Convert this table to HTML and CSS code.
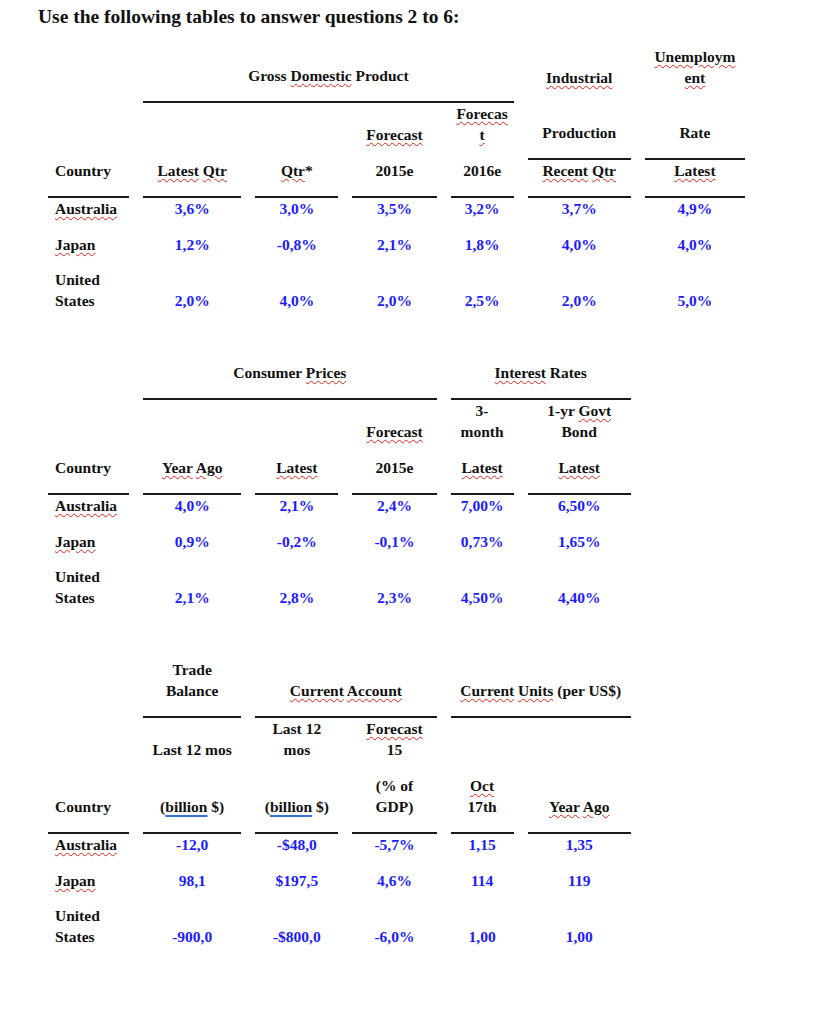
FILE: index.html
```html
<!DOCTYPE html>
<html>
<head>
<meta charset="utf-8">
<link rel="stylesheet" href="styles.css">
</head>
<body>
<p class="title">Use the following tables to answer questions 2 to 6:</p>

<table class="t">
  <colgroup><col class="c1"><col class="c2"><col class="c3"><col class="c4"><col class="c5"><col class="c6"><col class="c7"></colgroup>
  <tr class="h">
    <th></th>
    <th colspan="4" class="r">Gross <span class="sp">Domestic</span> Product</th>
    <th><span class="sp">Industrial</span></th>
    <th><span class="sp">Unemploym<br>ent</span></th>
  </tr>
  <tr class="h">
    <th></th><th></th><th></th>
    <th><span class="sp">Forecast</span></th>
    <th><span class="sp">Forecas<br>t</span></th>
    <th class="r">Production</th>
    <th class="r">Rate</th>
  </tr>
  <tr class="h">
    <th class="r cty">Country</th>
    <th class="r"><span class="sp">Latest</span> <span class="sp">Qtr</span></th>
    <th class="r"><span class="sp">Qtr</span>*</th>
    <th class="r">2015e</th>
    <th class="r">2016e</th>
    <th class="r"><span class="sp">Recent</span> <span class="sp">Qtr</span></th>
    <th class="r"><span class="sp">Latest</span></th>
  </tr>
  <tr class="d">
    <td class="cty"><span class="sp">Australia</span></td>
    <td>3,6%</td><td>3,0%</td><td>3,5%</td><td>3,2%</td><td>3,7%</td><td>4,9%</td>
  </tr>
  <tr class="d">
    <td class="cty"><span class="sp">Japan</span></td>
    <td>1,2%</td><td>-0,8%</td><td>2,1%</td><td>1,8%</td><td>4,0%</td><td>4,0%</td>
  </tr>
  <tr class="d">
    <td class="cty">United<br>States</td>
    <td>2,0%</td><td>4,0%</td><td>2,0%</td><td>2,5%</td><td>2,0%</td><td>5,0%</td>
  </tr>
</table>

<table class="t next">
  <colgroup><col class="c1"><col class="c2"><col class="c3"><col class="c4"><col class="c5"><col class="c6"><col class="c7"></colgroup>
  <tr class="h">
    <th></th>
    <th colspan="3" class="r">Consumer <span class="sp">Prices</span></th>
    <th colspan="2" class="r"><span class="sp">Interest</span> Rates</th>
    <th></th>
  </tr>
  <tr class="h">
    <th></th><th></th><th></th>
    <th><span class="sp">Forecast</span></th>
    <th>3-<br>month</th>
    <th>1-yr <span class="sp">Govt</span><br>Bond</th>
    <th></th>
  </tr>
  <tr class="h">
    <th class="r cty">Country</th>
    <th class="r"><span class="sp">Year</span> <span class="sp">Ago</span></th>
    <th class="r"><span class="sp">Latest</span></th>
    <th class="r">2015e</th>
    <th class="r"><span class="sp">Latest</span></th>
    <th class="r"><span class="sp">Latest</span></th>
    <th></th>
  </tr>
  <tr class="d">
    <td class="cty"><span class="sp">Australia</span></td>
    <td>4,0%</td><td>2,1%</td><td>2,4%</td><td>7,00%</td><td>6,50%</td><td></td>
  </tr>
  <tr class="d">
    <td class="cty"><span class="sp">Japan</span></td>
    <td>0,9%</td><td>-0,2%</td><td>-0,1%</td><td>0,73%</td><td>1,65%</td><td></td>
  </tr>
  <tr class="d">
    <td class="cty">United<br>States</td>
    <td>2,1%</td><td>2,8%</td><td>2,3%</td><td>4,50%</td><td>4,40%</td><td></td>
  </tr>
</table>

<table class="t next">
  <colgroup><col class="c1"><col class="c2"><col class="c3"><col class="c4"><col class="c5"><col class="c6"><col class="c7"></colgroup>
  <tr class="h">
    <th></th>
    <th class="r">Trade<br>Balance</th>
    <th colspan="2" class="r"><span class="sp">Current</span> <span class="sp">Account</span></th>
    <th colspan="2" class="r"><span class="sp">Current</span> <span class="sp">Units</span> (per US$)</th>
    <th></th>
  </tr>
  <tr class="h">
    <th></th>
    <th>Last 12 mos</th>
    <th>Last 12<br>mos</th>
    <th><span class="sp">Forecast</span><br>15</th>
    <th></th><th></th><th></th>
  </tr>
  <tr class="h">
    <th class="r cty">Country</th>
    <th class="r">(<span class="gr">billion</span> $)</th>
    <th class="r">(<span class="gr">billion</span> $)</th>
    <th class="r">(% of<br>GDP)</th>
    <th class="r"><span class="sp">Oct</span><br>17th</th>
    <th class="r"><span class="sp">Year</span> <span class="sp">Ago</span></th>
    <th></th>
  </tr>
  <tr class="d">
    <td class="cty"><span class="sp">Australia</span></td>
    <td>-12,0</td><td>-$48,0</td><td>-5,7%</td><td>1,15</td><td>1,35</td><td></td>
  </tr>
  <tr class="d">
    <td class="cty"><span class="sp">Japan</span></td>
    <td>98,1</td><td>$197,5</td><td>4,6%</td><td>114</td><td>119</td><td></td>
  </tr>
  <tr class="d">
    <td class="cty">United<br>States</td>
    <td>-900,0</td><td>-$800,0</td><td>-6,0%</td><td>1,00</td><td>1,00</td><td></td>
  </tr>
</table>
</body>
</html>
```

FILE: styles.css
```css
html, body {
  background: #ffffff;
}
body {
  margin: 0;
  padding: 6px 0 0 34px;
  font-family: "Liberation Serif", "Times New Roman", serif;
  font-weight: bold;
  color: #111111;
}
.title {
  margin: 0 0 0 4px;
  font-size: 19.5px;
  line-height: 22px;
}
.t {
  border-collapse: separate;
  border-spacing: 14px 0;
  table-layout: fixed;
  width: 725px;
  margin-top: 18px;
  font-size: 15.5px;
  line-height: 21px;
}
.t.next {
  margin-top: 36.5px;
}
.c1 { width: 81px; }
.c2 { width: 98px; }
.c3 { width: 83px; }
.c4 { width: 84px; }
.c5 { width: 63px; }
.c6 { width: 103px; }
.c7 { width: 100px; }
.t th, .t td {
  padding: 0;
  text-align: center;
  vertical-align: bottom;
  font-weight: bold;
  white-space: nowrap;
}
.h th {
  padding-bottom: 15px;
  color: #111111;
}
.d td {
  padding-bottom: 14.5px;
  color: #1c1cff;
}
.t .cty {
  text-align: left;
  padding-left: 7px;
  color: #111111;
}
.r {
  border-bottom: 2px solid #1a1a1a;
}
.sp {
  text-decoration: underline wavy #e2231a;
  text-decoration-thickness: 1px;
  text-underline-offset: 2px;
}
.gr {
  text-decoration: underline solid #3a6fd8;
  text-decoration-thickness: 2px;
  text-underline-offset: 3px;
}
```
